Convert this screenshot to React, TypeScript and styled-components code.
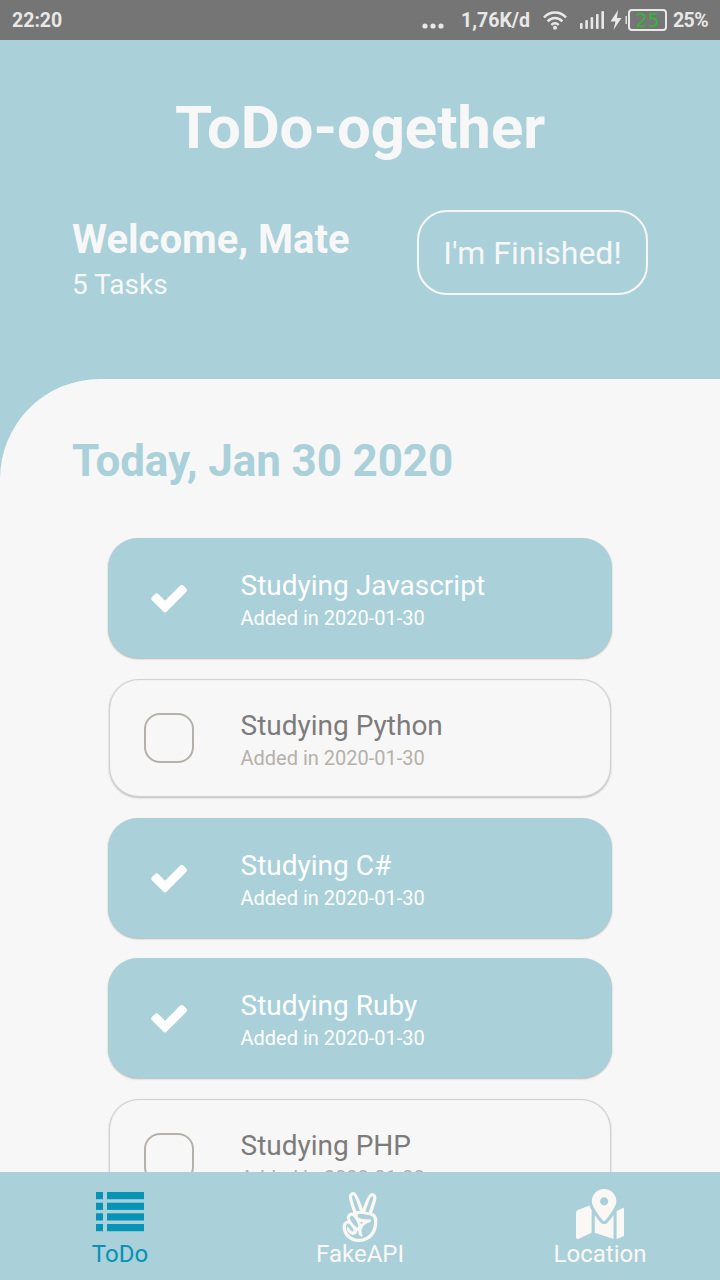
import React from "react";
import styled, { createGlobalStyle } from "styled-components";
import { FaAngellist, FaMapMarkedAlt } from "react-icons/fa";

const GlobalStyle = createGlobalStyle`
  * { box-sizing: border-box; }
  body { margin: 0; font-family: Roboto, sans-serif; }
`;

const Screen = styled.div`
  width: 720px;
  height: 1280px;
  display: flex;
  flex-direction: column;
  overflow: hidden;
  background: #aad0d9;
`;

const StatusBar = styled.div`
  height: 40px;
  flex: none;
  display: flex;
  align-items: center;
  justify-content: space-between;
  padding: 0 12px;
  background: #757575;
  color: #e8e8e8;
  font-size: 19.5px;
  font-weight: 700;
`;

const StatusGroup = styled.div`
  display: flex;
  align-items: center;
`;

const Dots = styled.svg`
  margin: 11px 17px 0 0;
`;

const Wifi = styled.svg`
  margin: 0 13px 0 13px;
`;

const Charge = styled.svg`
  margin-left: 5px;
`;

const Battery = styled.div`
  width: 39px;
  height: 22px;
  margin: 0 6px 0 0;
  border: 2px solid #e8e8e8;
  border-radius: 4px;
  display: flex;
  align-items: center;
  justify-content: center;
  color: #35b43b;
  font: 400 19px/18px "DejaVu Sans", sans-serif;
`;

const Percent = styled.span`
  letter-spacing: -0.6px;
`;

const Header = styled.header`
  height: 339px;
  flex: none;
  padding: 54px 72px 0;
  color: #f7f7f7;
`;

const Title = styled.h1`
  margin: 0;
  text-align: center;
  font-size: 60px;
  line-height: 68px;
  font-weight: 700;
  letter-spacing: -0.1px;
`;

const Greeting = styled.div`
  margin-top: 48px;
  display: flex;
  justify-content: space-between;
`;

const Welcome = styled.div`
  padding-top: 6px;
  font-size: 40px;
  line-height: 47px;
  font-weight: 700;
`;

const TaskCount = styled.div`
  margin-top: 5px;
  font-size: 28px;
  line-height: 34px;
  font-weight: 400;
`;

const FinishButton = styled.button`
  width: 231px;
  height: 85px;
  padding: 0;
  border: 2px solid #f7f7f7;
  border-radius: 30px;
  background: transparent;
  color: #f7f7f7;
  font: 400 32px Roboto, sans-serif;
`;

const Sheet = styled.main`
  flex: 1;
  min-height: 0;
  overflow: hidden;
  padding: 56px 72px 0;
  background: #f7f7f7;
  border-top-left-radius: 100px;
`;

const DateHeading = styled.h2`
  margin: 0;
  color: #aad0d9;
  font-size: 44px;
  line-height: 52px;
  font-weight: 700;
  letter-spacing: -0.12px;
`;

const TaskList = styled.div`
  display: flex;
  flex-direction: column;
  gap: 20px;
  padding: 51px 36px 0;
`;

const Card = styled.div<{ $done: boolean }>`
  height: ${(p) => (p.$done ? 120 : 118)}px;
  margin: ${(p) => (p.$done ? "0" : "1px")};
  flex: none;
  display: flex;
  align-items: center;
  border-radius: 30px;
  padding-left: ${(p) => (p.$done ? 36 : 35)}px;
  background: ${(p) => (p.$done ? "#aad0d9" : "#f7f7f7")};
  color: ${(p) => (p.$done ? "#ffffff" : "#7c7c7c")};
  box-shadow: ${(p) =>
    p.$done
      ? "0 1px 2px rgba(0, 0, 0, 0.28)"
      : "inset 0 0 1px 1px rgba(0, 0, 0, 0.17), 0 1px 2px rgba(0, 0, 0, 0.24)"};
`;

const Mark = styled.div<{ $done: boolean }>`
  width: 50px;
  height: 50px;
  margin-right: 46.5px;
  display: flex;
  align-items: center;
  justify-content: center;
  border: ${(p) => (p.$done ? "none" : "2px solid #b5b1aa")};
  border-radius: 16px;
`;

const TaskText = styled.div`
  padding-top: 6px;
`;

const TaskName = styled.div`
  font-size: 28px;
  line-height: 34px;
`;

const Added = styled.div<{ $done: boolean }>`
  font-size: 20px;
  line-height: 30px;
  color: ${(p) => (p.$done ? "#ffffff" : "#b5b1aa")};
`;

const TabBar = styled.nav`
  height: 108px;
  flex: none;
  display: flex;
  background: #aad0d9;
`;

const Tab = styled.div<{ $active?: boolean }>`
  flex: 1;
  display: flex;
  flex-direction: column;
  align-items: center;
  padding-top: 17px;
  font-size: 24px;
  line-height: 28px;
  color: ${(p) => (p.$active ? "#0693b5" : "#faf8f4")};
`;

const IconSlot = styled.div<{ $drop?: number }>`
  width: 48px;
  height: 51px;
  padding-top: ${(p) => p.$drop ?? 0}px;
  overflow-x: clip;
  display: flex;

  svg {
    flex: none;
    display: block;
  }
`;

const WideIcon = styled(FaMapMarkedAlt)`
  width: 56.25px;
  height: 50px;
`;

const PeaceIcon = styled(FaAngellist)`
  width: 50px;
  height: 50px;
  margin-left: -1px;
`;

const tasks = [
  { name: "Studying Javascript", done: true },
  { name: "Studying Python", done: false },
  { name: "Studying C#", done: true },
  { name: "Studying Ruby", done: true },
  { name: "Studying PHP", done: false },
];

const WifiIcon = () => (
  <Wifi width="24" height="19" viewBox="0 0 24 19" fill="none" stroke="#e8e8e8" strokeWidth="2.5">
    <path d="M1 6.5C7-.2 17-.2 23 6.5M4.7 10.4c4.2-4.5 10.4-4.5 14.6 0M8.4 14c2-2.4 5.2-2.4 7.2 0" />
    <circle cx="12" cy="16.8" r="2" fill="#e8e8e8" stroke="none" />
  </Wifi>
);

const SignalIcon = () => (
  <svg width="25" height="18" viewBox="0 0 25 18" fill="#e8e8e8">
    <rect x="0" y="12" width="2.6" height="6" rx="1" />
    <rect x="5.3" y="9" width="2.6" height="9" rx="1" />
    <rect x="10.6" y="6" width="2.6" height="12" rx="1" />
    <rect x="16" y="3" width="2.6" height="15" rx="1" />
    <rect x="21.4" y="0" width="2.6" height="18" rx="1" />
  </svg>
);

const ChargeIcon = () => (
  <Charge width="18" height="20" viewBox="0 0 18 20" fill="#e8e8e8">
    <path d="M8 0 .5 11.5H5.5L3.5 20 11.5 8H7Z" />
    <rect x="15.5" y="6" width="1.4" height="8" />
  </Charge>
);

const CheckIcon = () => (
  <svg width="41.4" height="41.4" viewBox="-22 -10 1792 1792" fill="currentColor">
    <path d="M1671 566q0 40-28 68l-724 724-136 136q-28 28-68 28t-68-28l-136-136-362-362q-28-28-28-68t28-68l136-136q28-28 68-28t68 28l294 295 656-657q28-28 68-28t68 28l136 136q28 28 28 68z" />
  </svg>
);

const ListIcon = () => (
  <svg width="48" height="40" viewBox="0 0 48 40" fill="currentColor">
    {[0, 10.7, 21.3, 32].map((y) => (
      <g key={y}>
        <rect x="0" y={y} width="7" height="7.2" />
        <rect x="11" y={y} width="37" height="7.2" />
      </g>
    ))}
  </svg>
);

export default function App() {
  return (
    <Screen>
      <GlobalStyle />
      <StatusBar>
        <span>22:20</span>
        <StatusGroup>
          <Dots width="22" height="6" viewBox="0 0 22 6" fill="#e8e8e8">
            <circle cx="3" cy="3" r="2.6" />
            <circle cx="11" cy="3" r="2.6" />
            <circle cx="19" cy="3" r="2.6" />
          </Dots>
          <span>1,76K/d</span>
          <WifiIcon />
          <SignalIcon />
          <ChargeIcon />
          <Battery>25</Battery>
          <Percent>25%</Percent>
        </StatusGroup>
      </StatusBar>
      <Header>
        <Title>ToDo-ogether</Title>
        <Greeting>
          <Welcome>
            Welcome, Mate
            <TaskCount>5 Tasks</TaskCount>
          </Welcome>
          <FinishButton>I'm Finished!</FinishButton>
        </Greeting>
      </Header>
      <Sheet>
        <DateHeading>Today, Jan 30 2020</DateHeading>
        <TaskList>
          {tasks.map((t) => (
            <Card key={t.name} $done={t.done}>
              <Mark $done={t.done}>{t.done && <CheckIcon />}</Mark>
              <TaskText>
                <TaskName>{t.name}</TaskName>
                <Added $done={t.done}>Added in 2020-01-30</Added>
              </TaskText>
            </Card>
          ))}
        </TaskList>
      </Sheet>
      <TabBar>
        <Tab $active>
          <IconSlot $drop={3}>
            <ListIcon />
          </IconSlot>
          ToDo
        </Tab>
        <Tab>
          <IconSlot $drop={3}>
            <PeaceIcon />
          </IconSlot>
          FakeAPI
        </Tab>
        <Tab>
          <IconSlot>
            <WideIcon />
          </IconSlot>
          Location
        </Tab>
      </TabBar>
    </Screen>
  );
}
